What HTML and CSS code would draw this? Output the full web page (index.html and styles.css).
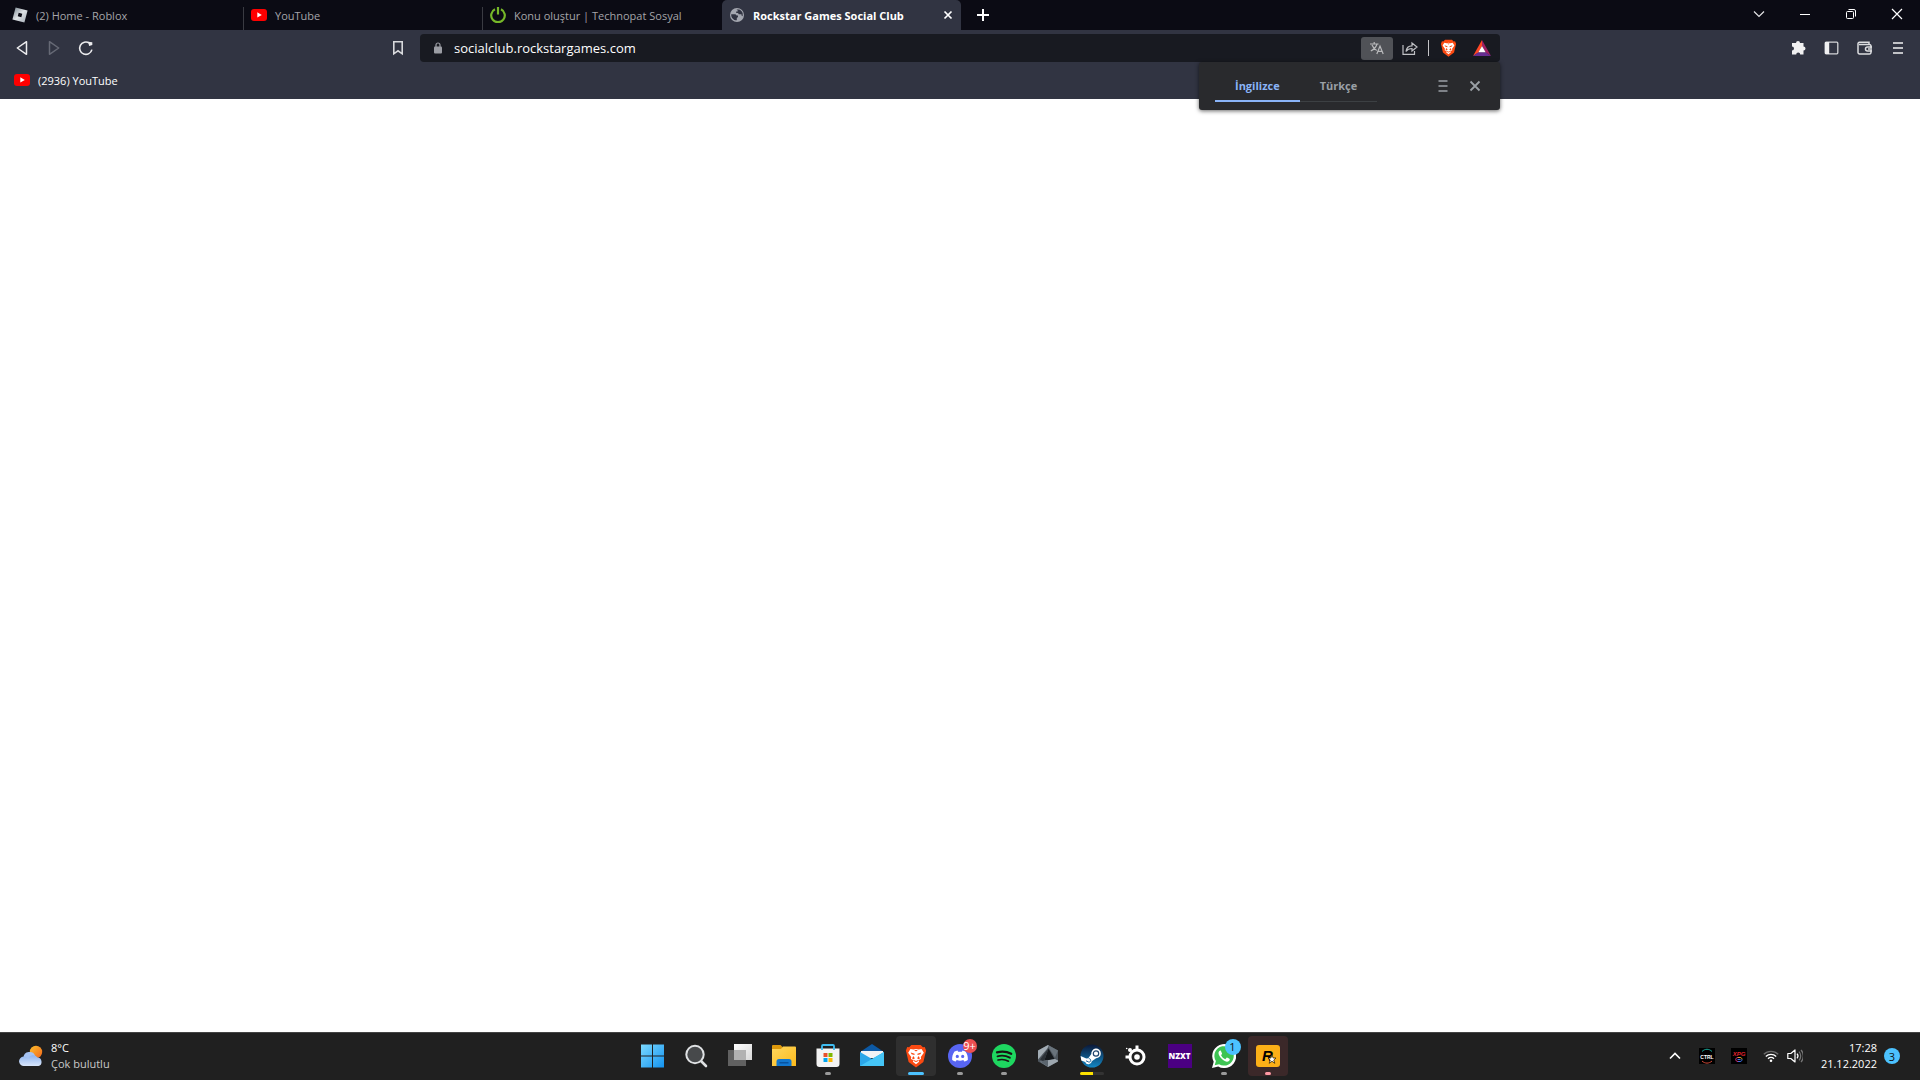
FILE: index.html
```html
<!DOCTYPE html>
<html lang="tr">

<head>
  <meta charset="UTF-8">
  <meta name="viewport" content="width=device-width, initial-scale=1.0">
  <title>Rockstar Games Social Club</title>
  <link rel="stylesheet" href="styles.css">
</head>

<body>
  <header class="browser">
    <div class="tabstrip">
      <nav class="tabs">
        <a class="tab" href="#">
          <svg class="icon" viewBox="0 0 16 16">
            <defs>
              <linearGradient id="silver" x1="0" y1="0" x2="1" y2="1">
                <stop offset="0" stop-color="#75828c" />
                <stop offset=".5" stop-color="#dfe3e6" />
                <stop offset="1" stop-color="#9fa8b2" />
              </linearGradient>
            </defs>
            <path fill="url(#silver)" fill-rule="evenodd" d="M3.600.400l12 3.200-3.200 12L.400 12.400zM6.700 5.700L5.700 9.300l3.600 1 1-3.600z" />
          </svg>
          <span>(2) Home - Roblox</span>
        </a>
        <a class="tab" href="#">
          <svg class="icon" viewBox="0 0 16 16">
            <rect y="2" width="16" height="12" rx="3" fill="#f00" />
            <path fill="#fff" d="M6.300 5.300v5.200L10.800 8z" />
          </svg>
          <span>YouTube</span>
        </a>
        <a class="tab" href="#">
          <svg class="icon" viewBox="0 0 16 16" fill="none" stroke="#76b729" stroke-width="2.200">
            <path d="M5 2.300a6.800 6.800 0 1 0 6 0M8 0v7.500" />
          </svg>
          <span>Konu oluştur | Technopat Sosyal</span>
        </a>
        <a class="tab tab-active" href="#">
          <svg class="icon" viewBox="0 0 16 16">
            <circle cx="8" cy="8" r="7" fill="#a4a7b0" />
            <path fill="#313442" d="M2.200 7.200h4.200l1.300 1.200H9v1.500l-1.200 1v2.400C4.500 13.400 2 10.700 2.200 7.200zM7.500 2.400h2.700c2 .8 3.200 2.200 3.500 4.200v2.600l-1.200-.8V7.200H9.800L9 6H7.200V4.600h1.500V3.500z" />
          </svg>
          <span>Rockstar Games Social Club</span>
          <svg class="tab-close" viewBox="0 0 10 10" stroke="#fff" stroke-width="1.700">
            <path d="M1.500 1.500l7 7M8.500 1.500l-7 7" />
          </svg>
        </a>
      </nav>
      <button class="new-tab" aria-label="Yeni sekme">
        <svg viewBox="0 0 12 12" stroke="#fff" stroke-width="2">
          <path d="M6 0v12M0 6h12" />
        </svg>
      </button>
      <div class="window-buttons">
        <button aria-label="Sekme ara"><svg viewBox="0 0 12 12" fill="none" stroke="#e4e4e6" stroke-width="1.200"><path d="M1 3.500l5 5 5-5" /></svg></button>
        <button aria-label="Küçült"><svg viewBox="0 0 12 12" stroke="#fff"><path d="M1 6.500h10" /></svg></button>
        <button aria-label="Geri yükle">
          <svg viewBox="0 0 12 12" fill="none" stroke="#fff">
            <rect x="1.500" y="3.500" width="7" height="7" rx="1" />
            <path d="M3.500 1.500h5.500a1.500 1.500 0 0 1 1.500 1.500v5.500" />
          </svg>
        </button>
        <button aria-label="Kapat"><svg viewBox="0 0 12 12" stroke="#fff" stroke-width="1.200"><path d="M1 1l10 10M11 1L1 11" /></svg></button>
      </div>
    </div>

    <div class="toolbar">
      <div class="toolbar-side">
        <button class="tool" aria-label="Geri"><svg class="icon" viewBox="0 0 16 16" fill="none" stroke="#ececee" stroke-width="1.500" stroke-linejoin="round"><path d="M12.500 1.700v12.600L3.300 8z" /></svg></button>
        <button class="tool" aria-label="İleri"><svg class="icon" viewBox="0 0 16 16" fill="none" stroke="#666975" stroke-width="1.500" stroke-linejoin="round"><path d="M3.500 1.700v12.600L12.700 8z" /></svg></button>
        <button class="tool" aria-label="Yenile">
          <svg class="icon" viewBox="0 0 16 16" fill="none" stroke="#ececee" stroke-width="1.600">
            <path d="M11.300 3a6.200 6.200 0 1 0 2.600 6.600" />
            <path d="M10.300 1.700l4 .6v2.800l-3.200 1z" fill="#ececee" stroke="none" />
          </svg>
        </button>
        <button class="tool tool-bookmark" aria-label="Yer işareti"><svg class="icon" viewBox="0 0 16 16" fill="none" stroke="#d8d9dc" stroke-width="1.600"><path d="M3.800 1.800h8.400v12L8 10.800l-4.200 3z" /></svg></button>
      </div>

      <div class="urlbar">
        <svg class="lock" viewBox="0 0 8 12">
          <rect y="4.500" width="8" height="7" rx="1" fill="#9b9da4" />
          <path d="M2 5V3a2 2 0 0 1 4 0v2" fill="none" stroke="#9b9da4" stroke-width="1.200" />
        </svg>
        <input class="url" type="text" value="socialclub.rockstargames.com" aria-label="Adres">
        <button class="translate-button" aria-label="Çevir">
          <svg viewBox="0 0 16 16" fill="none" stroke="#b9babc" stroke-width="1.200">
            <path d="M1 4h8.500M5.200 2v2M8 4c-.8 3-3.200 5.500-6.200 7M3 5c.8 2 2.500 4 4.700 5.500M7.800 14l3.200-8 3.200 8M9 11.300h4" />
          </svg>
        </button>
        <button class="share-button" aria-label="Paylaş">
          <svg class="icon" viewBox="0 0 16 16" fill="none" stroke="#bfc0c4" stroke-width="1.200">
            <path d="M1 5v9.400h11.500V11M4 11.500c.5-4 2.500-5.700 6-5.700V3l5 4-5 4V8.500c-2.800 0-4.500.7-6 3z" />
          </svg>
        </button>
        <button class="shield-button" aria-label="Brave Shields">
          <svg viewBox="0 0 24 26">
            <use href="#brave" />
          </svg>
        </button>
        <button class="rewards-button" aria-label="Brave Rewards">
          <svg viewBox="0 0 18 16">
            <path fill="#ff4724" d="M9 0L0 16l5.500-3.600L9 6z" />
            <path fill="#9e1f63" d="M9 0l9 16-5.500-3.600L9 6z" />
            <path fill="#662d91" d="M0 16l5.500-3.800h7L18 16z" />
            <path fill="#fff" d="M9 6l3.600 6.300H5.400z" />
          </svg>
        </button>

        <div class="translate">
          <div class="translate-tabs">
            <button class="language language-active">İngilizce</button>
            <button class="language">Türkçe</button>
          </div>
          <button class="translate-icon" aria-label="Seçenekler"><svg viewBox="0 0 12 12" stroke="#9aa0a6" stroke-width="1.600"><path d="M1.500 1h9M1.500 6h9M1.500 11h9" /></svg></button>
          <button class="translate-icon" aria-label="Kapat"><svg viewBox="0 0 12 12" stroke="#9aa0a6" stroke-width="1.800"><path d="M1.500 1.500l9 9M10.500 1.500l-9 9" /></svg></button>
        </div>
      </div>

      <div class="toolbar-side toolbar-end">
        <button class="tool" aria-label="Uzantılar">
          <svg class="icon" viewBox="0 0 16 16" fill="#f0f0f1">
            <path d="M1 3h4a2 2 0 0 1 4 0h3.500v3.500a1.900 1.900 0 0 1 0 4v4H9.200a2 2 0 0 0-4 0H1V10.500a2 2 0 0 0 0-4z" />
          </svg>
        </button>
        <button class="tool" aria-label="Kenar çubuğu">
          <svg class="icon" viewBox="0 0 16 16">
            <rect x="1.200" y="2.200" width="12.600" height="11.600" rx="1" fill="none" stroke="#d3d4d7" stroke-width="1.300" />
            <path d="M1 2h4.200v12H1z" fill="#f0f0f1" />
          </svg>
        </button>
        <button class="tool" aria-label="Cüzdan">
          <svg class="icon" viewBox="0 0 16 16" fill="none" stroke="#dcdde0" stroke-width="1.500">
            <path d="M12 4.500V2.200H2.500A1.500 1.500 0 0 0 1 3.500v9A1.500 1.500 0 0 0 2.500 14h10a1.500 1.500 0 0 0 1.500-1.500V6a1.500 1.500 0 0 0-1.500-1.500H2M15 7h-4.500a2 2 0 0 0 0 4H15M11 9h2" />
          </svg>
        </button>
        <button class="tool" aria-label="Menü"><svg class="icon" viewBox="0 0 16 16" stroke="#c1c2c6" stroke-width="2"><path d="M3 3h10M3 8h10M3 13h10" /></svg></button>
      </div>
    </div>

    <nav class="bookmarks">
      <a class="bookmark" href="#">
        <svg class="icon" viewBox="0 0 16 16">
          <rect y="2" width="16" height="12" rx="3" fill="#f00" />
          <path fill="#fff" d="M6.300 5.300v5.200L10.800 8z" />
        </svg>
        <span>(2936) YouTube</span>
      </a>
    </nav>
  </header>

  <main class="page"></main>

  <footer class="taskbar">
    <button class="weather">
      <svg viewBox="0 0 24 22">
        <defs>
          <linearGradient id="cloud" x1="0" y1="0" x2="0" y2="1">
            <stop offset="0" stop-color="#8fb4ee" />
            <stop offset="1" stop-color="#d9e6fb" />
          </linearGradient>
          <linearGradient id="sun" x1="0" y1="0" x2="1" y2="1">
            <stop offset="0" stop-color="#fcc02c" />
            <stop offset="1" stop-color="#f2661c" />
          </linearGradient>
        </defs>
        <circle cx="17" cy="7" r="6.200" fill="url(#sun)" />
        <path fill="#a5c2f2" d="M4.500 13a6 6 0 0 1 11.800-1.500L18 17H5z" />
        <path fill="url(#cloud)" d="M5 21a4.700 4.700 0 0 1-.5-9.400c2-.3 3.500.5 4.500 2a5.500 5.500 0 0 1 9.500-1A4.300 4.300 0 0 1 19.500 21z" />
      </svg>
      <span class="weather-text">
        <span>8°C</span>
        <span class="weather-state">Çok bulutlu</span>
      </span>
    </button>

    <div class="apps">
      <button class="app" aria-label="Başlat">
        <svg viewBox="0 0 24 24">
          <defs>
            <linearGradient id="win" gradientUnits="userSpaceOnUse" x1="0" y1="0" x2="24" y2="24">
              <stop offset="0" stop-color="#7fdcff" />
              <stop offset="1" stop-color="#1292f0" />
            </linearGradient>
          </defs>
          <path fill="url(#win)" d="M1 .500h11v11H1zM13 .500h11v11H13zM1 12.500h11v11H1zM13 12.500h11v11H13z" />
        </svg>
      </button>
      <button class="app" aria-label="Ara">
        <svg viewBox="0 0 24 24">
          <path d="M17 17l5 5" stroke="#dfe1e3" stroke-width="2.600" stroke-linecap="round" />
          <circle cx="11" cy="10.500" r="8.700" fill="#47494b" stroke="#dfe1e3" stroke-width="2" />
        </svg>
      </button>
      <button class="app" aria-label="Görev görünümü">
        <svg viewBox="0 0 24 24">
          <defs>
            <linearGradient id="pane" x1="0" y1="0" x2="1" y2="1">
              <stop offset="0" stop-color="#fff" />
              <stop offset="1" stop-color="#d8d8d8" />
            </linearGradient>
          </defs>
          <path fill="url(#pane)" d="M6 0h18v16H6z" />
          <path fill="#616161" d="M0 6h18v16H0z" />
          <path fill="#b2b2b2" d="M6 6h12v10H6z" />
        </svg>
      </button>
      <button class="app" aria-label="Dosya Gezgini">
        <svg viewBox="0 0 24 24">
          <defs>
            <linearGradient id="folder" x1="0" y1="0" x2="1" y2="1">
              <stop offset="0" stop-color="#ffd75e" />
              <stop offset="1" stop-color="#fcba1c" />
            </linearGradient>
          </defs>
          <path fill="#dd980b" d="M0 2a1 1 0 0 1 1-1h7.500l2 2v3H0z" />
          <path fill="url(#folder)" d="M0 5h9l2-2.500h12a1 1 0 0 1 1 1V22H0z" />
          <path fill="#1277cf" d="M4.500 22v-4.500A2.500 2.500 0 0 1 7 15h10a2.500 2.500 0 0 1 2.500 2.500V22z" />
          <path fill="#0753a0" d="M7.500 18h9v1.500h-9z" />
        </svg>
      </button>
      <button class="app app-open" aria-label="Microsoft Store">
        <svg viewBox="0 0 24 24">
          <path fill="none" stroke="#3fbcf0" stroke-width="1.800" d="M6 6V2a1 1 0 0 1 1-1h10a1 1 0 0 1 1 1v4" />
          <path fill="#f3f3f3" d="M.500 4.500h23V20a3 3 0 0 1-3 3h-17a3 3 0 0 1-3-3z" />
          <path fill="none" stroke="#3fbcf0" stroke-width="1.800" d="M6 6V4M18 6V4" />
          <path fill="#e8502a" d="M7.500 9h4v4h-4z" />
          <path fill="#7fb800" d="M12.500 9h4v4h-4z" />
          <path fill="#00a3ee" d="M7.500 14h4v4h-4z" />
          <path fill="#fdb802" d="M12.500 14h4v4h-4z" />
        </svg>
      </button>
      <button class="app" aria-label="Posta">
        <svg viewBox="0 0 24 24">
          <path fill="#0c59a4" d="M0 8l12-8 12 8v5H0z" />
          <path fill="#f1f3f5" d="M1 7h22v7H1z" />
          <path fill="#2aa6e8" d="M0 8l12 7L24 8v14H0z" />
          <path fill="#45c5f6" d="M0 22L24 8v14z" />
        </svg>
      </button>
      <button class="app app-active" aria-label="Brave">
        <svg viewBox="0 0 24 26">
          <defs>
            <g id="brave">
              <path fill="#fb4a12" d="M7 1h10l2.500 2.500 2-.2 1.500 4-.6 2L20 19.500 12 25.500 4 19.500 1.600 9.300 1 7.300l1.500-4 2 .2z" />
              <path fill="#fff" d="M6 5.500l3.200.5L12 5.500l2.800.5 3.200-.5L20.500 9.500 17.200 14l.3 2.300-3 1.400.9 1.600L12 22l-3.400-2.700.9-1.600-3-1.400.3-2.300L3.500 9.500z" />
              <path fill="#fb4a12" d="M6.300 9.200l4.200 1.300-.2 1.300-3.100-.8zM17.700 9.200l-4.200 1.300.2 1.300 3.100-.8zM9 13l1.800 2.400-1.600 1.200-1.400-1zM15 13l-1.800 2.400 1.600 1.200 1.400-1zM9.600 17.400l2.400 1 2.400-1-.3 1.200-2.100 1-2.100-1zM10 6.500h4l-2 1.500z" />
            </g>
          </defs>
          <use href="#brave" />
        </svg>
      </button>
      <button class="app app-open" aria-label="Discord">
        <svg viewBox="0 0 24 24">
          <circle cx="12" cy="12" r="12" fill="#5865f2" />
          <path fill="#fff" fill-rule="evenodd" d="M9.500 6.500l.6 1.200h3.800l.6-1.200 3 1c1.800 2.600 2.600 5.300 2.300 8.500-1.100.9-2.300 1.300-3.500 1.600l-1-1.500c-2.200.7-4.400.7-6.600 0l-1 1.500c-1.200-.3-2.400-.7-3.500-1.600-.3-3.200.5-5.900 2.300-8.500zM9.300 10.700a1.600 1.700 0 1 0 0 3.400 1.600 1.700 0 0 0 0-3.400M14.700 10.700a1.600 1.700 0 1 0 0 3.400 1.600 1.700 0 0 0 0-3.400" />
        </svg>
        <span class="app-badge app-badge-red">9+</span>
      </button>
      <button class="app app-open" aria-label="Spotify">
        <svg viewBox="0 0 24 24">
          <circle cx="12" cy="12" r="12" fill="#1ed760" />
          <path fill="none" stroke="#191414" stroke-linecap="round" stroke-width="2.300" d="M5 8.300c5-1.300 10-.8 14.200 1.500" />
          <path fill="none" stroke="#191414" stroke-linecap="round" stroke-width="1.900" d="M5.500 12.300c4.500-1.200 8.500-.7 12.300 1.400" />
          <path fill="none" stroke="#191414" stroke-linecap="round" stroke-width="1.600" d="M6 16c4-1 7.200-.6 10.500 1.200" />
        </svg>
      </button>
      <button class="app" aria-label="Armoury Crate">
        <svg viewBox="0 0 24 24">
          <path fill="#4d555d" d="M12 1l10 5.500v11L12 23 2 17.500v-11z" />
          <path fill="#a3adb5" d="M12 1L2 6.500v9L11 5l2-3.400z" />
          <path fill="#69737c" d="M12 1l10 5.500-3 7L13 4z" />
          <path fill="#14181c" d="M12.500 4.500l6 10.500L8 17.500z" />
          <path fill="#2b3137" d="M12.500 4.500L4 15.500l4 2z" />
          <path fill="#9da7af" d="M4 17.500l15-2.500 3 1.500v1L12 23z" />
          <path fill="#5b656e" d="M4 17.500l8 5.500v-6.900z" />
        </svg>
      </button>
      <button class="app app-progress" aria-label="Steam">
        <svg viewBox="0 0 24 24">
          <defs>
            <linearGradient id="steam" x1="0" y1="0" x2="0" y2="1">
              <stop offset="0" stop-color="#0b1838" />
              <stop offset="1" stop-color="#1387c4" />
            </linearGradient>
          </defs>
          <circle cx="12" cy="12" r="11.500" fill="url(#steam)" />
          <path fill="#fff" d="M.600 12l5.700 2.600 2-.3 3-4.300a4.800 4.800 0 1 1 4.800 4.200l-4.300 3A3.400 3.400 0 0 1 5.200 18L1.300 16.500z" />
          <circle cx="16" cy="9.500" r="2.700" fill="#fff" stroke="#22466e" stroke-width="1.200" />
          <path fill="none" stroke="#22679b" d="M6 16.800l2 .9a1.700 1.700 0 1 0 .8-3" />
        </svg>
      </button>
      <button class="app" aria-label="SteelSeries GG">
        <svg viewBox="0 0 24 24" fill="none" stroke="#fff">
          <circle cx="13" cy="13" r="7" stroke-width="3" />
          <circle cx="13" cy="13" r="2.800" fill="#fff" stroke="none" />
          <path stroke-width="3" d="M13 1.500v5M1.500 13h5" />
          <circle cx="6" cy="6" r="2" fill="#fff" stroke="none" />
          <circle cx="2.700" cy="4.500" r=".8" fill="#fff" stroke="none" />
        </svg>
      </button>
      <button class="app" aria-label="NZXT CAM"><span class="nzxt">NZXT</span></button>
      <button class="app app-open" aria-label="WhatsApp">
        <svg viewBox="0 0 24 24">
          <path fill="#fff" d="M0 24l1.700-6.200A12 12 0 1 1 6.200 22.400z" />
          <path fill="#3ec453" d="M2.700 21.300l1.200-4.200a9.700 9.700 0 1 1 3.200 3.100z" />
          <path fill="#fff" d="M8.800 6.500c-.5-.2-2.300.4-2.300 2.600 0 3 4.500 8.300 8.300 8.600 1.500.1 3-.9 3-2.500 0-.5-2.700-1.800-3-1.600l-1.500 1.600c-1.900-.8-3.300-2.200-4.200-4l1-1.400z" />
        </svg>
        <span class="app-badge app-badge-blue">1</span>
      </button>
      <button class="app app-open app-alert" aria-label="Rockstar Games Launcher">
        <svg viewBox="0 0 24 24">
          <rect y="1" width="24" height="22" rx="3" fill="#fcaf17" />
          <text class="rockstar-letter" x="6" y="17">R</text>
          <path fill="#fff" stroke="#332408" stroke-width=".8" d="M16 11l1.200 3H20l-2.200 2 1 3.300-2.800-2-2.800 2 1-3.300-2.200-2h2.800z" />
        </svg>
      </button>
    </div>

    <div class="tray">
      <button class="tray-icon" aria-label="Gizli simgeler"><svg viewBox="0 0 16 16" fill="none" stroke="#fff" stroke-width="1.600"><path d="M3 10.500l5-5 5 5" /></svg></button>
      <button class="tray-icon" aria-label="CTRL">
        <svg viewBox="0 0 16 16">
          <path fill="#000" d="M0 0h16v16H0z" />
          <path fill="none" stroke="#18a999" d="M3 3.500C6 .500 10 .500 13 3.500" />
          <path fill="none" stroke="#d64b38" d="M3 13c3 2.800 7 2.800 10 0" />
          <text class="ctrl-text" x="8" y="10.500">CTRL</text>
        </svg>
      </button>
      <button class="tray-icon" aria-label="XPG">
        <svg viewBox="0 0 16 16">
          <path fill="#000" d="M0 0h16v16H0z" />
          <text class="xpg-text" x="8" y="7.500">XPG</text>
          <path fill="none" stroke="#d63384" d="M7 9.500c-3 0-3 4 0 4" />
          <path fill="none" stroke="#e0a82a" d="M7 9.500h2c1.500 0 2 1 2 2" />
          <path fill="none" stroke="#3d72e8" d="M7 13.500h2c1.500 0 2-1 2-2M6.500 11.500h3" />
        </svg>
      </button>
      <button class="network" aria-label="Ağ ve ses">
        <svg viewBox="0 0 16 16" fill="none" stroke="#fff" stroke-width="1.300">
          <path stroke="#6c6c6c" d="M.800 6.300a10.300 10.300 0 0 1 14.400 0" />
          <path d="M2.800 8.500a7.400 7.400 0 0 1 10.400 0M5 10.700a4.300 4.300 0 0 1 6 0" />
          <circle cx="8" cy="12.800" r="1.300" fill="#fff" stroke="none" />
        </svg>
        <svg viewBox="0 0 16 16" fill="none" stroke="#fff" stroke-width="1.200">
          <path stroke-linejoin="round" d="M.800 5.500h3L8 2v12l-4.200-3.500h-3z" />
          <path d="M10 5.700a3.500 3.500 0 0 1 0 4.600" />
          <path stroke="#777" d="M12 3.700a6.300 6.300 0 0 1 0 8.600M14 2a8.800 8.800 0 0 1 0 12" />
        </svg>
      </button>
      <button class="clock">
        <span>17:28</span>
        <span>21.12.2022</span>
      </button>
      <button class="notifications" aria-label="Bildirimler">3</button>
    </div>
  </footer>
</body>

</html>
```

FILE: styles.css
```css
html {
  box-sizing: border-box;
  font-family: "Open Sans", "Noto Sans", sans-serif;
  font-size: 11px;
}

*,
*::before,
*::after {
  box-sizing: inherit;
}

body {
  display: flex;
  flex-direction: column;
  min-height: 100vh;
  margin: 0;
  background-color: #fff;
}

a {
  color: inherit;
  text-decoration: none;
}

button {
  display: flex;
  align-items: center;
  justify-content: center;
  margin: 0;
  padding: 0;
  border: 0;
  background: none;
  color: inherit;
  font: inherit;
}

svg {
  display: block;
  flex: none;
}

.icon {
  width: 16px;
  height: 16px;
}

/* Tabs */
.browser {
  background-color: #313442;
  color: #fff;
}

.tabstrip {
  display: flex;
  height: 30px;
  background-color: #0b0b14;
}

.tabs {
  display: flex;
  padding-left: 5px;
}

.tab {
  display: flex;
  align-items: center;
  gap: 8px;
  width: 239px;
  padding: 0 8px 0 7px;
  color: #a5a5a9;
  white-space: nowrap;
  background: linear-gradient(#3a3b42, #3a3b42) right bottom / 1px 23px no-repeat;
}

.tab:nth-child(3) {
  background: none;
}

.tab-active {
  border-radius: 5px 5px 0 0;
  background: #313442;
  color: #fff;
  font-weight: bold;
}

.tab-close {
  width: 10px;
  height: 10px;
  margin-left: auto;
}

.new-tab {
  width: 44px;
}

.new-tab svg {
  width: 12px;
  height: 12px;
}

.window-buttons {
  display: flex;
  margin-left: auto;
}

.window-buttons button {
  width: 46px;
  height: 28px;
}

.window-buttons svg {
  width: 12px;
  height: 12px;
}

/* Toolbar */
.toolbar {
  display: flex;
  align-items: center;
  height: 36px;
}

.toolbar-side {
  display: flex;
  flex: 1;
  padding: 0 6px;
}

.toolbar-end {
  justify-content: flex-end;
  gap: 1px;
}

.tool {
  width: 32px;
  height: 28px;
}

.tool-bookmark {
  margin-left: auto;
}

.urlbar {
  position: relative;
  display: flex;
  flex: 0 1 1080px;
  align-items: center;
  height: 28px;
  padding: 0 9px 0 14px;
  border-radius: 4px;
  background-color: #181a21;
}

.lock {
  width: 8px;
  height: 12px;
}

.url {
  flex: 1;
  min-width: 0;
  margin-left: 12px;
  padding: 0;
  border: 0;
  outline: 0;
  background: none;
  color: #fff;
  font: inherit;
  font-size: 13px;
}

.translate-button {
  width: 32px;
  height: 23px;
  border-radius: 3px;
  background-color: #505257;
}

.translate-button svg {
  width: 16px;
  height: 16px;
}

.share-button {
  width: 36px;
  height: 16px;
  border-right: 1px solid #c5c5c8;
  padding-right: 2px;
}

.shield-button {
  width: 38px;
  margin-right: 6px;
}

.shield-button svg {
  width: 17px;
  height: 18px;
}

.rewards-button svg {
  width: 18px;
  height: 16px;
}

/* Translate bubble under the address bar */
.translate {
  position: absolute;
  top: 100%;
  right: 0;
  z-index: 1;
  display: flex;
  align-items: center;
  width: 301px;
  height: 48px;
  padding: 0 9px 0 16px;
  border-radius: 3px;
  background-color: #292a2d;
  box-shadow: 0 1px 4px rgba(0, 0, 0, 0.6);
}

.translate-tabs {
  display: flex;
  margin-right: auto;
}

.language {
  height: 32px;
  padding: 0 20px;
  border-bottom: 1px solid #3c4043;
  color: #9aa0a6;
  font-weight: bold;
}

.language-active {
  border-bottom: 2px solid #8ab4f8;
  color: #8ab4f8;
}

.translate-icon {
  width: 32px;
  height: 32px;
}

.translate-icon svg {
  width: 12px;
  height: 12px;
}

/* Bookmarks */
.bookmarks {
  display: flex;
  height: 33px;
  padding: 0 14px;
}

.bookmark {
  display: flex;
  align-items: center;
  gap: 8px;
  height: 28px;
}

.page {
  flex: 1;
}

/* Taskbar */
.taskbar {
  display: flex;
  align-items: center;
  height: 48px;
  background-color: #202020;
  box-shadow: inset 0 1px #434343;
  color: #fff;
}

.weather {
  flex: 1;
  justify-content: flex-start;
  gap: 8px;
  padding-left: 19px;
}

.weather svg {
  width: 24px;
  height: 22px;
}

.weather-text {
  display: flex;
  flex-direction: column;
  align-items: flex-start;
  line-height: 16px;
}

.weather-state {
  color: #c9c9c9;
}

.apps {
  display: flex;
  gap: 4px;
}

.app {
  position: relative;
  width: 40px;
  height: 40px;
  border-radius: 4px;
}

.app svg {
  width: 24px;
  height: 24px;
}

.app-active {
  background-color: #2f2f2f;
}

.app-alert {
  background-color: #3b2829;
}

/* Running indicator below the icon */
.app-open::after,
.app-active::after,
.app-progress::after {
  content: "";
  position: absolute;
  bottom: 1px;
  left: 50%;
  width: 6px;
  height: 3px;
  border-radius: 2px;
  background-color: #9a9a9a;
  transform: translateX(-50%);
}

.app-active::after {
  width: 16px;
  background-color: #4cc2ff;
}

.app-progress::after {
  width: 24px;
  background: linear-gradient(90deg, #fce100 54%, #333 54%);
}

.app-alert::after {
  background-color: #ff99a4;
}

.app-badge {
  position: absolute;
  top: 3px;
  right: 3px;
  width: 16px;
  height: 16px;
  border-radius: 50%;
  line-height: 16px;
  text-align: center;
}

.app-badge-red {
  width: 14px;
  height: 14px;
  background-color: #ed4f51;
  line-height: 14px;
}

.app-badge-blue {
  background-color: #4cc2ff;
  color: #111;
}

.nzxt {
  width: 24px;
  height: 24px;
  background-color: #4b0082;
  font-size: 8px;
  font-weight: 800;
  line-height: 24px;
}

.rockstar-letter {
  font-family: "Liberation Sans", sans-serif;
  font-size: 15px;
  font-style: italic;
  font-weight: bold;
}

/* Tray */
.tray {
  display: flex;
  flex: 1;
  align-items: center;
  justify-content: flex-end;
  padding-right: 20px;
}

.tray-icon {
  width: 32px;
  height: 40px;
}

.tray svg {
  width: 16px;
  height: 16px;
}

.ctrl-text,
.xpg-text {
  fill: #fff;
  font-family: "Liberation Sans", sans-serif;
  font-size: 5px;
  font-weight: bold;
  text-anchor: middle;
}

.xpg-text {
  fill: #e0232e;
  font-size: 6px;
  font-style: italic;
}

.network {
  gap: 8px;
  padding: 0 8px;
}

.clock {
  flex-direction: column;
  align-items: flex-end;
  width: 66px;
  line-height: 16px;
}

.notifications {
  width: 16px;
  height: 16px;
  margin-left: 7px;
  border-radius: 50%;
  background-color: #4cc2ff;
  color: #111;
}
```
